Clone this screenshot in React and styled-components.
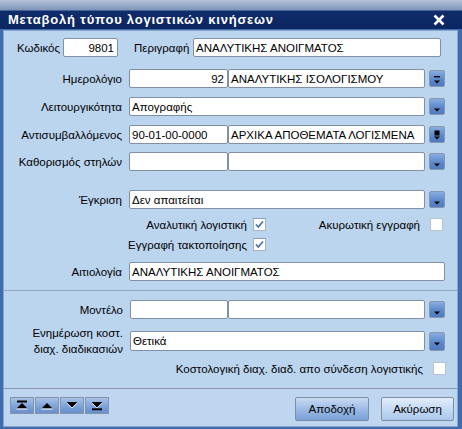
import React from 'react';
import styled, { createGlobalStyle } from 'styled-components';

const Global = createGlobalStyle`
  html, body { margin: 0; padding: 0; background: #bcd5ef; }
  body { font-family: "Liberation Sans", Arial, sans-serif; font-size: 11.5px; color: #000; }
  * { box-sizing: border-box; }
`;

const Window = styled.div`
  width: 462px;
  height: 429px;
  display: flex;
  flex-direction: column;
  background: #3f6cae;
  overflow: hidden;
`;

const TitleBar = styled.div`
  height: 29px;
  flex: none;
  display: flex;
  align-items: center;
  justify-content: space-between;
  padding: 10px 17px 0 8px;
  background: linear-gradient(#b6c3d7 0px, #98abc8 5px, #7f96bb 10px, #0f2c6b 11px, #0b2560 100%);
  color: #fff;
  font-weight: bold;
  font-size: 13px;
  letter-spacing: 0.78px;
`;

const CloseIcon = styled.svg`
  width: 12px;
  height: 12px;
  display: block;
`;

const Body = styled.div`
  flex: 1;
  display: flex;
  flex-direction: column;
  margin: 1px 4px 2px 3px;
  background: #bcd5ef;
  border: 1px solid #8aa5c6;
`;

const Section = styled.div`
  display: flex;
  flex-direction: column;
  padding: ${p => p.$pad};
  border-top: ${p => (p.$top ? '1px solid #8ea6c2' : 'none')};
`;

const Row = styled.div`
  display: flex;
  align-items: center;
  height: ${p => p.$h || 19}px;
  margin-top: ${p => p.$mt || 0}px;
  padding-left: ${p => p.$pl || 0}px;
  padding-right: ${p => p.$pr || 0}px;
`;

const Label = styled.div`
  flex: none;
  width: ${p => (p.$w ? `${p.$w}px` : 'auto')};
  text-align: ${p => (p.$left ? 'left' : 'right')};
  padding-right: ${p => (p.$pr !== undefined ? p.$pr : 7)}px;
  margin-left: ${p => p.$ml || 0}px;
  white-space: nowrap;
  line-height: ${p => p.$lh || 14}px;
`;

const Spacer = styled.div`
  flex: 1;
`;

const Input = styled.div`
  flex: none;
  width: ${p => p.$w}px;
  height: ${p => p.$h || 19}px;
  margin-left: ${p => p.$ml || 0}px;
  background: #fff;
  border: 1px solid #8190a4;
  border-radius: 2px;
  display: flex;
  align-items: center;
  justify-content: ${p => (p.$right ? 'flex-end' : 'flex-start')};
  padding: 0 ${p => (p.$right ? 3 : 2)}px 0 2px;
  white-space: nowrap;
  overflow: hidden;
`;

const DropButton = styled.div`
  flex: none;
  width: 16px;
  height: ${p => p.$h || 17}px;
  margin-left: 4px;
  border: 1px solid #8798ae;
  border-radius: 2px;
  background: linear-gradient(#88ade2, #5d89cb 55%, #4f7bbf);
  display: flex;
  align-items: center;
  justify-content: center;
`;

const Check = styled.div`
  flex: none;
  width: 13px;
  height: 13px;
  background: #fff;
  border: 1px solid ${p => (p.$checked ? '#a5b3c4' : '#b8c4d2')};
  border-top-color: ${p => (p.$checked ? '#8e9cb0' : '#b8c4d2')};
  display: flex;
  align-items: center;
  justify-content: center;
`;

const Footer = styled.div`
  flex: 1;
  display: flex;
  align-items: flex-start;
  padding: 8px 3px 0 6px;
  border-top: 1px solid #8796aa;
  background: #bfd6f0;
`;

const NavGroup = styled.div`
  display: flex;
  gap: 1px;
`;

const NavButton = styled.div`
  width: 24px;
  height: 17px;
  border: 1px solid #8594a8;
  background: linear-gradient(#a7c2e8, #7aa0d6 60%, #6990cc);
  display: flex;
  align-items: center;
  justify-content: center;
`;

const Button = styled.div`
  width: ${p => p.$w}px;
  height: 24px;
  margin-left: ${p => p.$ml || 0}px;
  border: 1px solid #7f8ea3;
  border-radius: 2px;
  display: flex;
  align-items: center;
  justify-content: center;
  background: ${p =>
    p.$primary
      ? 'linear-gradient(#c9dbf2, #98b8e4 55%, #7aa1d8)'
      : 'linear-gradient(#e2edfa, #c2d8f3 55%, #a9c7ee)'};
`;

const Arrow = ({ kind }) => (
  <svg width="8" height="12" viewBox="0 0 8 12">
    {kind === 'bar' && <rect x="1" y="3" width="6" height="1.4" fill="#000" />}
    {kind === 'square' && <rect x="1.5" y="1.5" width="5" height="5" fill="#000" />}
    <polygon points="1,7.5 7,7.5 4,10.5" fill="#000" />
  </svg>
);

const Tick = () => (
  <svg width="9" height="9" viewBox="0 0 9 9">
    <polyline points="1,4.5 3.3,7 8,1.5" fill="none" stroke="#4a72ad" strokeWidth="1.8" />
  </svg>
);

const NavIcon = ({ dir, bar }) => (
  <svg width="14" height="11" viewBox="0 0 14 11">
    {dir === 'up' ? (
      <g>
        {bar && <rect x="2" y="0.5" width="10" height="2" fill="#000" />}
        <polygon points="7,3 12.5,8.5 1.5,8.5" fill="#000" />
        <rect x="1.5" y="8.5" width="11" height="1" fill="#fff" />
      </g>
    ) : (
      <g>
        <polygon points="1.5,2 12.5,2 7,7.5" fill="#000" />
        <polyline points="1.5,2.5 7,8 12.5,2.5" fill="none" stroke="#fff" strokeWidth="0.9" opacity="0.8" />
        {bar && <rect x="2" y="8.3" width="10" height="2" fill="#000" />}
      </g>
    )}
  </svg>
);

export default function App() {
  return (
    <Window>
      <Global />
      <TitleBar>
        <span>Μεταβολή τύπου λογιστικών κινήσεων</span>
        <CloseIcon viewBox="0 0 12 12">
          <path d="M1.5 1.5 L10.5 10.5 M10.5 1.5 L1.5 10.5" stroke="#fff" strokeWidth="2.6" />
        </CloseIcon>
      </TitleBar>
      <Body>
        <Section $pad="7px 0 9px 0">
          <Row $pl={13}>
            <Label $w={46} $left $pr={0}>Κωδικός</Label>
            <Input $w={55} $right>9801</Input>
            <Label $ml={16} $w={59} $left $pr={0}>Περιγραφή</Label>
            <Input $w={248}>ΑΝΑΛΥΤΙΚΗΣ ΑΝΟΙΓΜΑΤΟΣ</Input>
          </Row>

          <Row $mt={12}>
            <Label $w={125}>Ημερολόγιο</Label>
            <Input $w={99} $right>92</Input>
            <Input $w={197}>ΑΝΑΛΥΤΙΚΗΣ ΙΣΟΛΟΓΙΣΜΟΥ</Input>
            <DropButton><Arrow kind="bar" /></DropButton>
          </Row>

          <Row $mt={9}>
            <Label $w={125}>Λειτουργικότητα</Label>
            <Input $w={296}>Απογραφής</Input>
            <DropButton><Arrow /></DropButton>
          </Row>

          <Row $mt={9}>
            <Label $w={125}>Αντισυμβαλλόμενος</Label>
            <Input $w={99}>90-01-00-0000</Input>
            <Input $w={197}>ΑΡΧΙΚΑ ΑΠΟΘΕΜΑΤΑ ΛΟΓΙΣΜΕΝΑ</Input>
            <DropButton><Arrow kind="square" /></DropButton>
          </Row>

          <Row $mt={8}>
            <Label $w={125}>Καθορισμός στηλών</Label>
            <Input $w={99} />
            <Input $w={197} />
            <DropButton><Arrow /></DropButton>
          </Row>

          <Row $mt={19}>
            <Label $w={125}>Έγκριση</Label>
            <Input $w={296}>Δεν απαιτείται</Input>
            <DropButton><Arrow /></DropButton>
          </Row>

          <Row $mt={9} $h={13} $pr={14}>
            <Label $w={249} $pr={6}>Αναλυτική λογιστική</Label>
            <Check $checked><Tick /></Check>
            <Spacer />
            <Label $pr={10}>Ακυρωτική εγγραφή</Label>
            <Check />
          </Row>

          <Row $mt={7} $h={13}>
            <Label $w={249} $pr={6}>Εγγραφή τακτοποίησης</Label>
            <Check $checked><Tick /></Check>
          </Row>

          <Row $mt={11}>
            <Label $w={125}>Αιτιολογία</Label>
            <Input $w={316}>ΑΝΑΛΥΤΙΚΗΣ ΑΝΟΙΓΜΑΤΟΣ</Input>
          </Row>
        </Section>

        <Section $top $pad="9px 0 13px 0">
          <Row>
            <Label $w={126}>Μοντέλο</Label>
            <Input $w={98} />
            <Input $w={197} />
            <DropButton><Arrow /></DropButton>
          </Row>

          <Row $mt={12} $h={20}>
            <Label $w={126} $lh={16}>Ενημέρωση κοστ.<br />διαχ. διαδικασιών</Label>
            <Input $w={295} $h={20}>Θετικά</Input>
            <DropButton $h={19}><Arrow /></DropButton>
          </Row>

          <Row $mt={11} $h={13} $pr={11}>
            <Spacer />
            <Label $pr={10}>Κοστολογική διαχ. διαδ. απο σύνδεση λογιστικής</Label>
            <Check />
          </Row>
        </Section>

        <Footer>
          <NavGroup>
            <NavButton><NavIcon dir="up" bar /></NavButton>
            <NavButton><NavIcon dir="up" /></NavButton>
            <NavButton><NavIcon dir="down" /></NavButton>
            <NavButton><NavIcon dir="down" bar /></NavButton>
          </NavGroup>
          <Spacer />
          <Button $w={74} $primary>Αποδοχή</Button>
          <Button $w={73} $ml={12}>Ακύρωση</Button>
        </Footer>
      </Body>
    </Window>
  );
}
